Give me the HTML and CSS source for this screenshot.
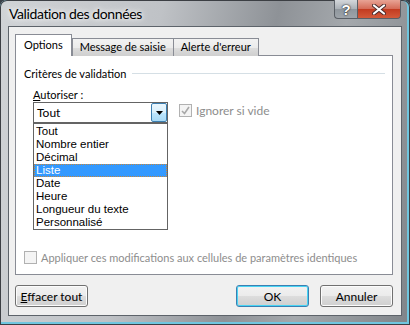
FILE: index.html
```html
<!DOCTYPE html>
<html lang="fr">
<head>
    <meta charset="UTF-8">
    <title>Validation des données</title>
    <link rel="stylesheet" href="styles.css">
</head>
<body>
    <div class="window">
        <div class="titlebar">
            <span class="title">Validation des données</span>
            <div class="caption-btns">
                <span class="cap-btn help">?</span>
                <span class="cap-btn close">
                    <svg width="14" height="11" viewBox="0 0 14 11">
                        <path d="M2 1.5 L12 9.5 M12 1.5 L2 9.5" stroke="#4a2a2a" stroke-width="4" stroke-linecap="round"/>
                        <path d="M2 1.5 L12 9.5 M12 1.5 L2 9.5" stroke="#ffffff" stroke-width="2.2" stroke-linecap="round"/>
                    </svg>
                </span>
            </div>
        </div>
        <div class="client">
            <div class="tabs">
                <div class="tab active">Options</div>
                <div class="tab">Message de saisie</div>
                <div class="tab">Alerte d'erreur</div>
            </div>
            <div class="panel">
                <div class="group-head">
                    <span>Critères de validation</span>
                    <span class="group-line"></span>
                </div>
                <div class="field-label"><u>A</u>utoriser :</div>
                <div class="field-row">
                    <div class="combo">
                        <span class="combo-value">Tout</span>
                        <span class="combo-btn">
                            <svg width="7" height="4" viewBox="0 0 7 4"><path d="M0 0 H7 L3.5 4 Z" fill="#000"/></svg>
                        </span>
                        <ul class="combo-list">
                            <li>Tout</li>
                            <li>Nombre entier</li>
                            <li>Décimal</li>
                            <li class="selected">Liste</li>
                            <li>Date</li>
                            <li>Heure</li>
                            <li>Longueur du texte</li>
                            <li>Personnalisé</li>
                        </ul>
                    </div>
                    <label class="check disabled">
                        <span class="box checked">
                            <svg width="9" height="9" viewBox="0 0 9 9"><path d="M1 5 L3.5 7.5 L8 1" stroke="#a8a8a8" stroke-width="1.6" fill="none"/></svg>
                        </span>
                        Ignorer si vide
                    </label>
                </div>
                <label class="check disabled apply">
                    <span class="box"></span>
                    Appliquer ces modifications aux cellules de paramètres identiques
                </label>
            </div>
            <div class="footer">
                <button class="btn"><u>E</u>ffacer tout</button>
                <div class="footer-right">
                    <button class="btn default">OK</button>
                    <button class="btn">Annuler</button>
                </div>
            </div>
        </div>
    </div>
</body>
</html>
```

FILE: styles.css
```css
body {
    margin: 0;
    background: #3a4048;
    font-family: Lato, "Liberation Sans", sans-serif;
}
.window {
    width: 410px;
    height: 325px;
    box-sizing: border-box;
    padding: 0 8px 9px 8px;
    display: flex;
    flex-direction: column;
    border-radius: 7px 7px 0 0;
    background: linear-gradient(100deg, #d0d3d6 0%, #bfc2c6 35%, #8e9297 60%, #a4a8ac 75%, #7f8489 100%);
    box-shadow: inset 0 0 0 1px #3c3f44, inset -1px -1px 0 2px #6fc6df;
}
.titlebar {
    height: 26px;
    display: flex;
    justify-content: space-between;
    align-items: flex-start;
}
.title {
    padding: 5px 0 0 1px;
    font-size: 14px;
    letter-spacing: -0.4px;
    color: #000;
    text-shadow: 0 0 8px #fff, 0 0 4px #fff;
}
.caption-btns {
    display: flex;
    margin-right: 1px;
}
.cap-btn {
    height: 18px;
    display: flex;
    align-items: center;
    justify-content: center;
    border: 1px solid #5a5f66;
    border-top: none;
}
.help {
    width: 22px;
    border-radius: 0 0 0 4px;
    border-right: none;
    background: linear-gradient(#d4d7db, #aab0b6 50%, #8f969d 51%, #9ea4aa);
    font-family: "Liberation Sans", sans-serif;
    font-size: 15px;
    font-weight: bold;
    color: #fff;
    text-shadow: 0 0 2px #222, 0 0 1px #111;
}
.close {
    width: 42px;
    border-radius: 0 0 4px 0;
    background: linear-gradient(#e8a495, #d46a56 50%, #c23b20 51%, #d35a3a);
}
.client {
    flex: 1;
    background: #f0f0f0;
    border: 1px solid #5d636a;
    padding: 8px 8px 8px 6px;
    display: flex;
    flex-direction: column;
    font-size: 11px;
    color: #000;
}
.tabs {
    display: flex;
    align-items: flex-end;
    height: 21px;
    position: relative;
    z-index: 1;
}
.tab {
    height: 17px;
    line-height: 16px;
    padding: 0 7px;
    border: 1px solid #898c95;
    border-bottom: none;
    margin-left: -1px;
    background: linear-gradient(#f2f2f2, #ebebeb 50%, #dddddd 51%, #cfcfcf);
}
.tab:first-child {
    margin-left: 0;
}
.tab.active {
    height: 21px;
    line-height: 19px;
    background: #fff;
    padding: 0 8px;
    margin-right: 1px;
}
.panel {
    flex: 1;
    margin-top: -1px;
    background: #fff;
    border: 1px solid #898c95;
    padding: 0 7px 0 8px;
    display: flex;
    flex-direction: column;
}
.group-head {
    display: flex;
    align-items: center;
    margin-top: 11px;
    gap: 6px;
}
.group-line {
    flex: 1;
    height: 1px;
    background: #d5dfe5;
}
.field-label {
    margin: 8px 0 0 9px;
}
.field-row {
    display: flex;
    align-items: flex-start;
    margin: 1px 0 0 9px;
    gap: 11px;
}
.combo {
    position: relative;
    width: 133px;
    height: 19px;
    border: 1px solid #646464;
    display: flex;
    justify-content: space-between;
    align-items: stretch;
    font-size: 12px;
}
.combo-value {
    padding-left: 3px;
    line-height: 19px;
}
.combo-btn {
    width: 14px;
    border: 1px solid #3c7fb1;
    border-radius: 2px;
    background: linear-gradient(#eaf6fd, #d9f0fc 50%, #bee6fd 51%, #a7d9f5);
    display: flex;
    align-items: center;
    justify-content: center;
}
.combo-list {
    position: absolute;
    left: -1px;
    top: 20px;
    width: 133px;
    margin: 0;
    padding: 0;
    list-style: none;
    background: #fff;
    border: 1px solid #646464;
    font-family: "Liberation Sans", Tahoma, sans-serif;
    font-size: 11.5px;
}
.combo-list li {
    height: 13px;
    line-height: 13px;
    padding-left: 1px;
    border: 1px dotted transparent;
    border-width: 0 1px;
}
.combo-list li:first-child {
    margin-top: 1px;
}
.combo-list li.selected {
    background: #3399ff;
    color: #fff;
    border: 1px dotted #c7873c;
    height: 11px;
    line-height: 11px;
}
.check {
    display: flex;
    align-items: center;
    gap: 4px;
    white-space: nowrap;
}
.check.disabled {
    color: #8d8d8d;
}
.box {
    width: 11px;
    height: 11px;
    border: 1px solid #b1b1b1;
    background: #f4f4f4;
    display: flex;
    align-items: center;
    justify-content: center;
}
.field-row .check {
    margin-top: 1px;
    font-size: 12px;
}
.apply {
    margin-top: auto;
    margin-bottom: 10px;
}
.footer {
    display: flex;
    justify-content: space-between;
    margin-top: 10px;
}
.footer-right {
    display: flex;
    gap: 11px;
}
.btn {
    width: 73px;
    height: 22px;
    padding: 0;
    font-family: Lato, "Liberation Sans", sans-serif;
    font-size: 12px;
    color: #000;
    border: 1px solid #707070;
    border-radius: 3px;
    background: linear-gradient(#f2f2f2, #ebebeb 50%, #dddddd 51%, #cfcfcf);
    box-shadow: inset 0 0 0 1px #fcfcfc;
}
.btn.default {
    border-color: #3c7fb1;
    box-shadow: inset 0 0 0 1px #48d4f4;
}
```
